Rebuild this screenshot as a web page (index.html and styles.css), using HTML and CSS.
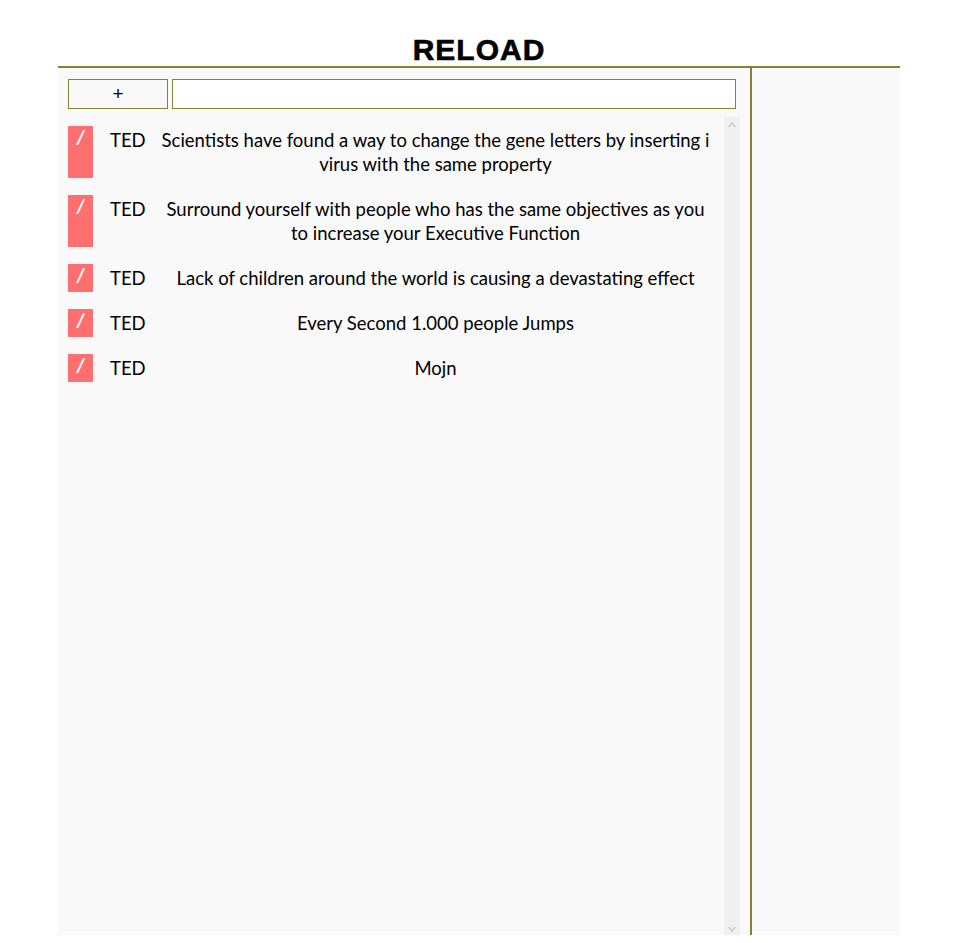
FILE: index.html
```html
<!DOCTYPE html>
<html>
<head>
<meta charset="utf-8">
<link rel="stylesheet" href="styles.css">
</head>
<body>
<h1 class="title">RELOAD</h1>
<div class="board">
  <div class="main">
    <div class="toolbar">
      <button class="add-btn">+</button>
      <input class="search" type="text">
    </div>
    <div class="list-wrap">
      <ul class="list">
        <li class="item"><span class="tag">/</span><span class="source">TED</span><span class="text">Scientists have found a way to change the gene letters by inserting i virus with the same property</span></li>
        <li class="item"><span class="tag">/</span><span class="source">TED</span><span class="text">Surround yourself with people who has the same objectives as you to increase your Executive Function</span></li>
        <li class="item"><span class="tag">/</span><span class="source">TED</span><span class="text">Lack of children around the world is causing a devastating effect</span></li>
        <li class="item"><span class="tag">/</span><span class="source">TED</span><span class="text">Every Second 1.000 people Jumps</span></li>
        <li class="item"><span class="tag">/</span><span class="source">TED</span><span class="text">Mojn</span></li>
      </ul>
      <div class="scrollbar">
        <svg class="arrow up" width="8" height="5" viewBox="0 0 8 5"><path d="M0 5 L4 0 L8 5 L6.5 5 L4 2 L1.5 5 Z" fill="#c4c4c4"/></svg>
        <svg class="arrow down" width="8" height="5" viewBox="0 0 8 5"><path d="M0 0 L4 5 L8 0 L6.5 0 L4 3 L1.5 0 Z" fill="#c4c4c4"/></svg>
      </div>
    </div>
  </div>
  <div class="side"></div>
</div>
</body>
</html>
```
FILE: styles.css
```css
html, body {
  margin: 0;
  padding: 0;
  background: #ffffff;
  height: 100%;
  overflow: hidden;
}
body {
  font-family: "Lato", "Liberation Sans", sans-serif;
  color: #000;
}
.title {
  margin: 0;
  padding-top: 33px;
  height: 33px;
  text-align: center;
  font-family: "Liberation Sans", sans-serif;
  font-weight: 700;
  font-size: 30px;
  line-height: 33px;
  letter-spacing: 1px;
  -webkit-text-stroke: 0.6px #000;
}
.board {
  margin: 0 58px;
  border-top: 2px solid #868232;
  display: flex;
  height: 867px;
  background: #f9f9f9;
}
.main {
  width: 694px;
  border-right: 2px solid #868232;
  padding: 11px 10px 0 10px;
  box-sizing: border-box;
  display: flex;
  flex-direction: column;
}
.side {
  flex: 1;
}
.toolbar {
  display: flex;
  gap: 4px;
  height: 30px;
}
.add-btn {
  width: 100px;
  height: 30px;
  border: 1px solid #868232;
  background: #f9f9f9;
  font-size: 19px;
  font-family: "Liberation Sans", sans-serif;
  padding: 0;
  color: #000;
}
.search {
  width: 564px;
  height: 30px;
  box-sizing: border-box;
  border: 1px solid #868232;
  background: #fff;
  margin: 0;
}
.list-wrap {
  display: flex;
  margin-top: 8px;
  flex: 1;
}
.list {
  list-style: none;
  margin: 0;
  padding: 9px 0 0 0;
  width: 656px;
}
.item {
  display: flex;
  align-items: flex-start;
  margin-bottom: 17px;
  font-size: 18.5px;
  line-height: 24px;
}
.tag {
  width: 25px;
  background: #ff6f6f;
  color: #fff;
  font-style: italic;
  font-weight: 700;
  font-size: 19px;
  text-align: center;
  align-self: stretch;
  line-height: 22px;
  min-height: 28px;
  box-sizing: border-box;
}
.source {
  margin-left: 17px;
  width: 44px;
  padding-top: 2px;
}
.text {
  flex: 1;
  text-align: center;
  padding: 2px 0;
  margin: 0 13px 0 6px;
}
.scrollbar {
  width: 16px;
  background: #efefef;
  position: relative;
}
.arrow {
  position: absolute;
  left: 4px;
}
.arrow.up {
  top: 5px;
}
.arrow.down {
  bottom: 3px;
}
```
